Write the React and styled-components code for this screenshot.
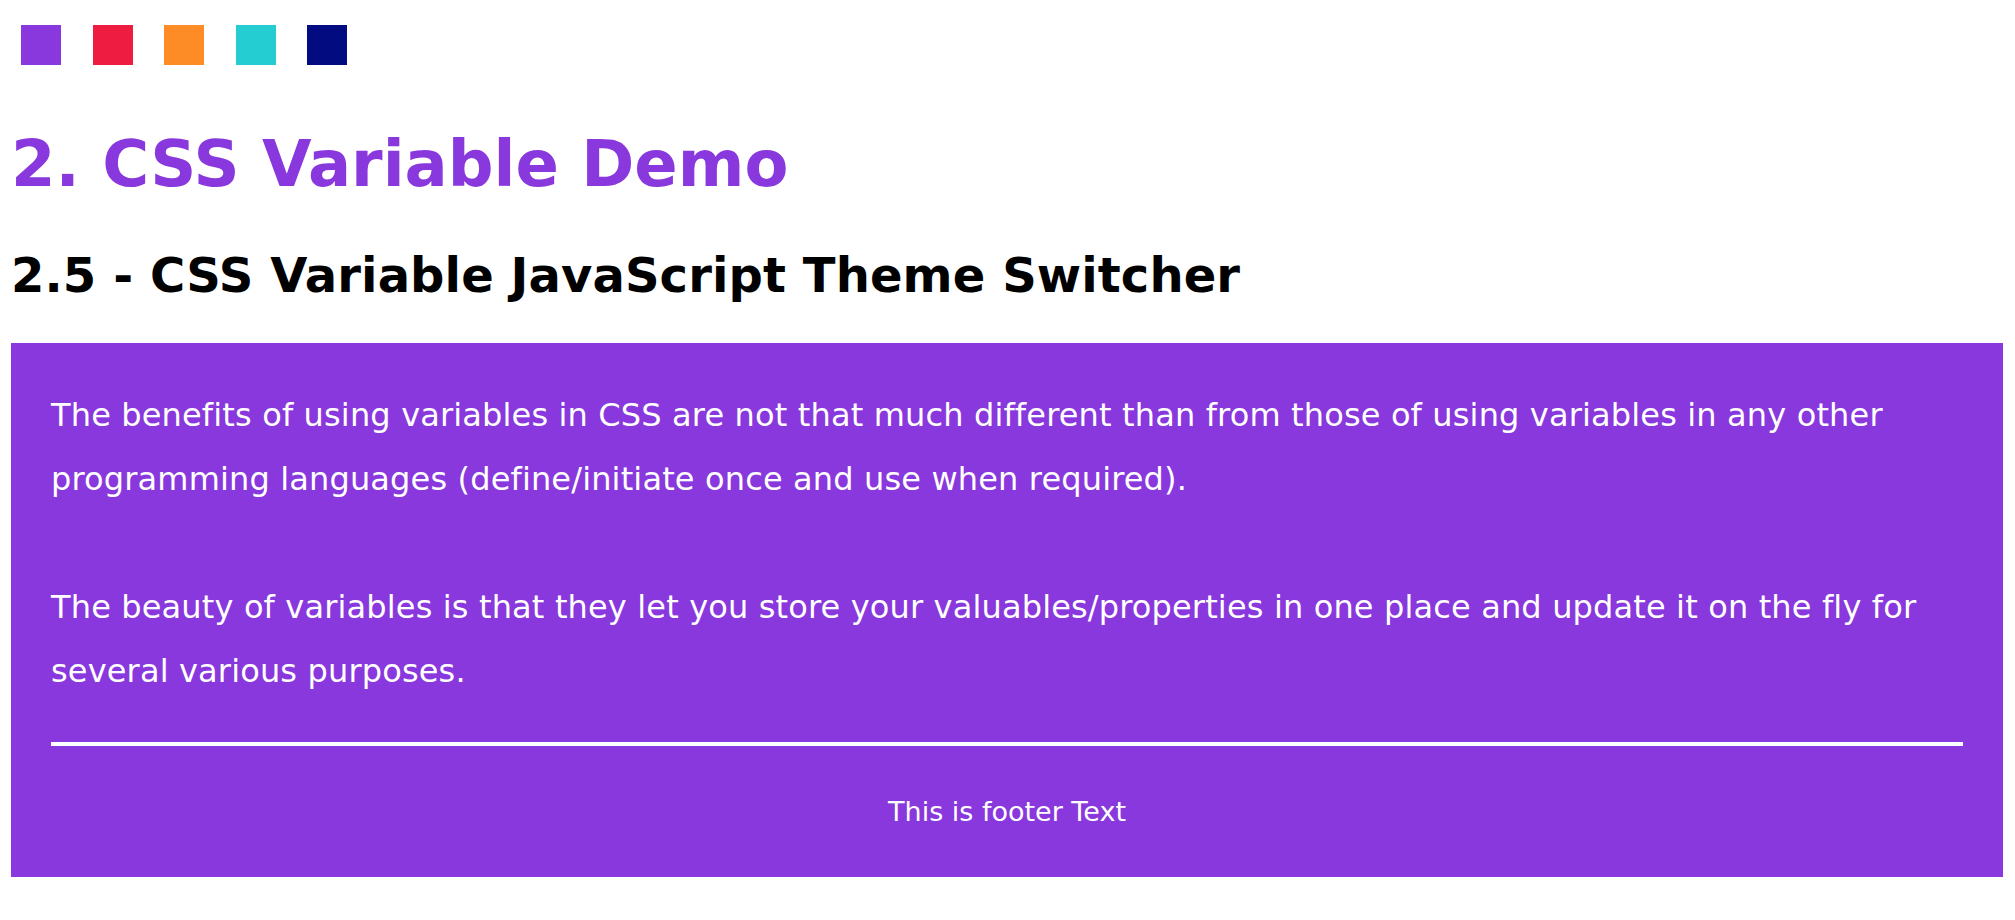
import React from 'react';
import styled, { createGlobalStyle } from 'styled-components';

const GlobalStyle = createGlobalStyle`
  body {
    margin: 0;
    background: #fff;
    font-family: "DejaVu Sans", Verdana, sans-serif;
  }
`;

const Page = styled.div`
  padding: 25px 12px 40px 11px;
`;

const Swatches = styled.div`
  display: flex;
  gap: 31.5px;
  padding-left: 10px;
`;

const Swatch = styled.button`
  width: 40px;
  height: 40px;
  border: 0;
  padding: 0;
  background: ${(p) => p.color};
  cursor: pointer;
`;

const Title = styled.h1`
  margin: 62px 0 0;
  font-size: 64px;
  font-weight: bold;
  color: #8938dd;
  line-height: normal;
`;

const Subtitle = styled.h2`
  margin: 46px 0 0;
  font-size: 48px;
  font-weight: bold;
  color: #000;
  line-height: normal;
  letter-spacing: 0.1px;
`;

const Card = styled.section`
  margin-top: 40px;
  padding: 40px;
  background: #8938dd;
  color: #fff;
`;

const Text = styled.p`
  margin: 0 0 64px;
  font-size: 32px;
  line-height: 64px;
  letter-spacing: 0.15px;
  &:last-of-type {
    margin-bottom: 0;
  }
`;

const Rule = styled.hr`
  margin: 39px 0 0;
  border: 0;
  height: 4px;
  background: #fff;
`;

const Footer = styled.footer`
  margin-top: 41px;
  font-size: 27px;
  line-height: 50px;
  text-align: center;
`;

const colors = ['#8938dd', '#ee1c41', '#fe8c26', '#24cdd1', '#030b80'];

export default function App() {
  return (
    <Page>
      <GlobalStyle />
      <Swatches>
        {colors.map((c) => (
          <Swatch key={c} color={c} aria-label={c} />
        ))}
      </Swatches>
      <Title>2. CSS Variable Demo</Title>
      <Subtitle>2.5 - CSS Variable JavaScript Theme Switcher</Subtitle>
      <Card>
        <Text>
          The benefits of using variables in CSS are not that much different than from those of using
          variables in any other programming languages (define/initiate once and use when required).
        </Text>
        <Text>
          The beauty of variables is that they let you store your valuables/properties in one place and
          update it on the fly for several various purposes.
        </Text>
        <Rule />
        <Footer>This is footer Text</Footer>
      </Card>
    </Page>
  );
}
